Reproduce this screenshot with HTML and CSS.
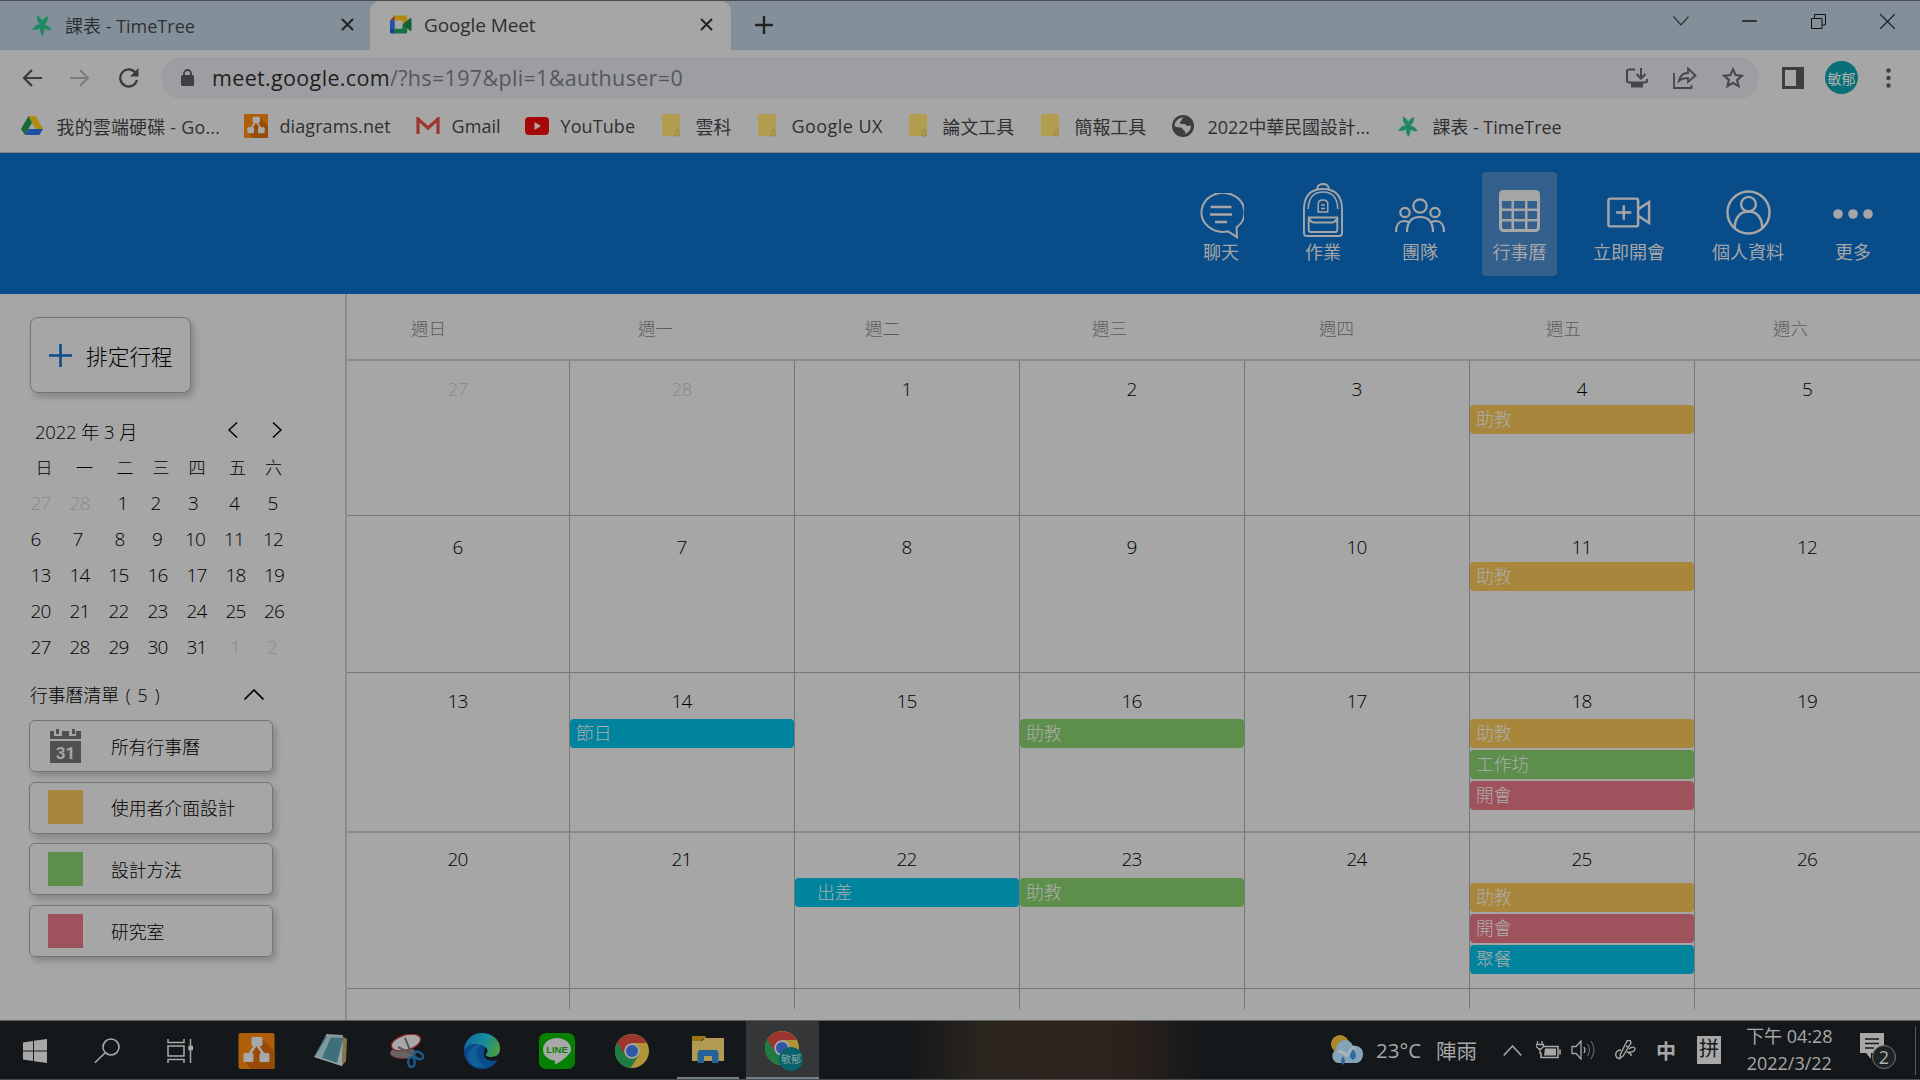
FILE: index.html
```html
<!DOCTYPE html>
<html lang="zh-Hant">
<head>
<meta charset="utf-8">
<title>Google Meet</title>
<link rel="stylesheet" href="styles.css">
</head>
<body>
<svg class="defs" width="0" height="0">
  <defs>
    <symbol id="timetree" viewBox="0 0 22 22">
      <g fill="#1f8a61"><path id="petal" d="M11 11.500C7.500 8 8.500 4 11 0c2.500 4 3.500 8 0 11.500z" transform="rotate(-28 11 11)"/><use href="#petal" transform="rotate(62 11 11)"/><use href="#petal" transform="rotate(-88 11 11)"/><use href="#petal" transform="rotate(146 11 11)"/><use href="#petal" transform="rotate(206 11 11)"/></g>
    </symbol>
    <symbol id="folder" viewBox="0 0 18 23"><rect width="18" height="22" rx="2" fill="#b19c50"/><path d="M13.500 22v-5q2-3 3.500 0v5z" fill="#b19c50" stroke="#94803a" stroke-width=".8"/></symbol>
    <symbol id="diagrams" viewBox="0 0 36 36">
      <rect width="36" height="36" rx="2" fill="#af5f0a"/><path d="M22 4l14 14v18H13L6 28z" fill="#984a08"/>
      <path d="M18 11L9 24M18 11l9 13" stroke="#a8a8a8" stroke-width="2.500"/><g fill="#a8a8a8"><rect x="13" y="4" width="11" height="9" rx="1.500"/><rect x="5" y="20" width="10" height="9" rx="1.500"/><rect x="21" y="20" width="10" height="9" rx="1.500"/></g>
    </symbol>
    <symbol id="chrome" viewBox="0 0 34 34">
      <circle cx="17" cy="17" r="17" fill="#b09435"/>
      <path d="M17 17L2.300 8.500A17 17 0 0 0 15.500 34L24 21z" fill="#1f7a43"/>
      <path d="M17 9h14.800A17 17 0 0 0 2.300 8.500L10 21z" fill="#9b352d"/>
      <circle cx="17" cy="17" r="7.800" fill="#a8a8a8"/><circle cx="17" cy="17" r="6" fill="#2f57a4"/>
    </symbol>
  </defs>
</svg>

<header class="browser">
  <div class="tabs">
    <div class="tab">
      <svg class="tab-icon" width="22" height="22"><use href="#timetree"/></svg>
      <span class="tab-title">課表 - TimeTree</span>
      <svg width="13" height="13" viewBox="0 0 13 13"><path d="M1 1l11 11M12 1L1 12" stroke="#222" stroke-width="2"/></svg>
    </div>
    <div class="tab tab-active">
      <svg class="tab-icon" width="22" height="19" viewBox="0 0 23 19"><path d="M0 5h5v9H0z" fill="#1f50a5"/><path d="M0 14h5v5H2q-2 0-2-2z" fill="#174290"/><path d="M5 0v5H0z" fill="#9c3028"/><path d="M5 0h11q2 0 2 2v4l-5 3V5H5z" fill="#b08a12"/><path d="M5 14h8v-4l5-1v8q0 2-2 2H5z" fill="#147340"/><path d="M13 9.500L21 3q1.500-1 1.500 1v11q0 2-1.500 1z" fill="#145f35"/></svg>
      <span class="tab-title latin">Google Meet</span>
      <svg width="13" height="13" viewBox="0 0 13 13"><path d="M1 1l11 11M12 1L1 12" stroke="#222" stroke-width="2"/></svg>
    </div>
    <svg class="new-tab" width="18" height="18" viewBox="0 0 18 18"><path d="M9 0v18M0 9h18" stroke="#222" stroke-width="2.400"/></svg>
    <div class="window-controls">
      <svg width="16" height="10" viewBox="0 0 16 10"><path d="M.5.5L8 9 15.500.5" fill="none" stroke="#333" stroke-width="1.200"/></svg>
      <svg width="15" height="2" viewBox="0 0 15 2"><path d="M0 1h15" stroke="#111" stroke-width="1.400"/></svg>
      <svg width="15" height="15" viewBox="0 0 15 15"><path d="M.5 4.500h10.500v10H.5zM3.500 4V.5h11V11H11" fill="none" stroke="#111"/></svg>
      <svg width="15" height="15" viewBox="0 0 15 15"><path d="M0 0l15 15M15 0L0 15" stroke="#111" stroke-width="1.100"/></svg>
    </div>
  </div>

  <div class="toolbar">
    <svg width="20" height="18" viewBox="0 0 20 18"><path d="M20 9H2M10 1L2 9l8 8" fill="none" stroke="#3a3b3d" stroke-width="2.200"/></svg>
    <svg width="20" height="18" viewBox="0 0 20 18"><path d="M0 9h18M10 1l8 8-8 8" fill="none" stroke="#7b7c7e" stroke-width="2"/></svg>
    <svg width="21" height="21" viewBox="0 0 21 21"><path d="M18 6.500A8.500 8.500 0 1 0 19 13" fill="none" stroke="#3a3b3d" stroke-width="2.300"/><path d="M20.500 1v8.500h-8.500z" fill="#3a3b3d"/></svg>
    <div class="omnibox">
      <svg width="13" height="17" viewBox="0 0 13 17"><rect y="6" width="13" height="11" rx="1.500" fill="#3e3f42"/><path d="M3 7V4.500a3.500 3.500 0 0 1 7 0V7" fill="none" stroke="#3e3f42" stroke-width="1.800"/></svg>
      <span class="url"><span class="host">meet.google.com</span>/?hs=197&amp;pli=1&amp;authuser=0</span>
      <div class="omni-actions">
        <svg width="22" height="20" viewBox="0 0 22 20"><path d="M9 1.500H3Q1 1.500 1 3.500v9q0 2 2 2h16q2 0 2-2V11M15 0v10M10.500 6l4.500 4.500L19.500 6" fill="none" stroke="#45464a" stroke-width="2"/><path d="M5 15h12v4.500H5z" fill="#45464a"/></svg>
        <svg width="24" height="22" viewBox="0 0 24 22"><path d="M1 6v15h17.500v-3M6 14C7 8 11 6 15 6V1.500l7.500 7L15 15v-4c-4 0-7 1-9 3z" fill="none" stroke="#45464a" stroke-width="1.800"/></svg>
        <svg width="22" height="21" viewBox="0 0 22 21"><path d="M11 2.200l2.600 5.900 6.300.6-4.800 4.200 1.500 6.300L11 15.900l-5.600 3.300 1.500-6.300-4.800-4.200 6.300-.6z" fill="none" stroke="#45464a" stroke-width="2"/></svg>
      </div>
    </div>
    <svg class="panel-icon" width="22" height="22" viewBox="0 0 22 22"><path d="M0 0h22v22H0zM3 3v16h11V3z" fill="#3e3f42" fill-rule="evenodd"/></svg>
    <span class="avatar">敏郁</span>
    <svg width="5" height="20" viewBox="0 0 5 20"><g fill="#3e3f42"><circle cx="2.500" cy="2.500" r="2.200"/><circle cx="2.500" cy="10" r="2.200"/><circle cx="2.500" cy="17.500" r="2.200"/></g></svg>
  </div>

  <div class="bookmarks">
    <div class="bookmark drive"><svg width="22" height="20" viewBox="0 0 22 20"><path d="M7.500 0h7L11 6.500 4 19 0 13z" fill="#176b3a"/><path d="M7.500 0h7L22 13h-7.500z" fill="#b08c10"/><path d="M4 19l3.500-6H22l-3.500 6z" fill="#1f50a5"/></svg><span>我的雲端硬碟 - Go...</span></div>
    <div class="bookmark"><svg width="24" height="24"><use href="#diagrams"/></svg><span class="latin">diagrams.net</span></div>
    <div class="bookmark"><svg width="24" height="18" viewBox="0 0 24 18"><path d="M2 17V2l10 9L22 2v15" fill="none" stroke="#9c3630" stroke-width="3.200"/></svg><span class="latin">Gmail</span></div>
    <div class="bookmark"><svg width="24" height="18" viewBox="0 0 24 18"><rect width="24" height="18" rx="4" fill="#a60707"/><path d="M9.500 5l6.500 4-6.500 4z" fill="#b5a5a5"/></svg><span class="latin">YouTube</span></div>
    <div class="bookmark narrow"><svg width="18" height="23"><use href="#folder"/></svg><span>雲科</span></div>
    <div class="bookmark narrow"><svg width="18" height="23"><use href="#folder"/></svg><span class="latin wide">Google UX</span></div>
    <div class="bookmark narrow"><svg width="18" height="23"><use href="#folder"/></svg><span>論文工具</span></div>
    <div class="bookmark narrow"><svg width="18" height="23"><use href="#folder"/></svg><span>簡報工具</span></div>
    <div class="bookmark"><svg width="22" height="22" viewBox="0 0 22 22"><circle cx="11" cy="11" r="11" fill="#3c3d40"/><path d="M12 2.500c-3 1-1 2-3 3.500s-1 3 1 3 3-.5 4 1 3 1 5 .5c0 4-2 7-6 8.500 0-2 1-2-1-3.500s-1-3-4-3-5-1-5.500-2C3 6 7 2 12 2.500z" fill="#a3a3a3"/></svg><span>2022中華民國設計...</span></div>
    <div class="bookmark"><svg width="22" height="22"><use href="#timetree"/></svg><span>課表 - TimeTree</span></div>
  </div>
</header>

<nav class="app-nav">
  <a class="nav-item"><span class="nav-icon"><svg width="46" height="46" viewBox="0 0 46 46" fill="none" stroke="#a6a6a6" stroke-width="2"><path d="M38.500 34.500A21.500 19.500 0 1 0 30 38.300L39 44z"/><path d="M12.500 14h21M12 21.500h22M17 29h12" stroke-width="2.400"/></svg></span>聊天</a>
  <a class="nav-item"><span class="nav-icon"><svg width="40" height="54" viewBox="0 0 42 54" preserveAspectRatio="none" fill="none" stroke="#a6a6a6" stroke-width="2"><path d="M15 6V5q1-4 6-4t6 4v1M1 50V25Q2 6 21 6t20 19v25q0 3-3 3H4q-3 0-3-3z"/><path d="M5.500 26Q6 9 21 9t15.500 17M16 29v-8q0-4 5-4t5 4v8zM19 22h4M19 25.500h4" stroke-width="1.600"/><path d="M6 34.500h30V47q0 2-2 2H8q-2 0-2-2zM6.500 36q2 3.500 5 3.500h19q3 0 5-3.500"/></svg></span>作業</a>
  <a class="nav-item"><span class="nav-icon"><svg width="50" height="35" viewBox="0 0 50 35" fill="none" stroke="#a6a6a6" stroke-width="2.200"><circle cx="25" cy="8" r="6.700"/><circle cx="10" cy="14.500" r="4.700"/><circle cx="40" cy="14.500" r="4.700"/><path d="M12 34C12 25 16 19 25 19s13 6 13 15M1 34c0-8 4-11 8-11q3 0 6 2M49 34c0-8-4-11-8-11q-3 0-6 2"/></svg></span>團隊</a>
  <a class="nav-item nav-active"><span class="nav-icon"><svg width="41" height="42" viewBox="0 0 41 42"><path fill="#a6a6a6" fill-rule="evenodd" d="M5 0h31q5 0 5 5v32q0 5-5 5H5q-5 0-5-5V5q0-5 5-5zM3 11v7.500h9.500V11zM15 11v7.500h11V11zM28.500 11v7.500H38V11zM3 21v8h9.500v-8zM15 21v8h11v-8zM28.500 21v8H38v-8zM3 31.500V37q0 2 2 2h7.500v-7.500zM15 31.500V39h11v-7.500zM28.500 31.500V39H36q2 0 2-2v-5.500z"/></svg></span>行事曆</a>
  <a class="nav-item"><span class="nav-icon"><svg width="44" height="31" viewBox="0 0 46 32" fill="none" stroke="#a6a6a6" stroke-width="2.600"><rect x="1.500" y="1.500" width="31" height="29" rx="2"/><path d="M32 13l12-8v22l-12-8M17.500 8.500v15M9.500 16h16"/></svg></span>立即開會</a>
  <a class="nav-item"><span class="nav-icon"><svg width="45" height="45" viewBox="0 0 46 46" fill="none" stroke="#a6a6a6" stroke-width="2.500"><circle cx="23" cy="23" r="21.500"/><circle cx="23" cy="14.500" r="7.500"/><path d="M9 38.500C9 29 14 22 23 22s14 7 14 16.500"/></svg></span>個人資料</a>
  <a class="nav-item"><span class="nav-icon"><svg width="40" height="10" viewBox="0 0 40 10" fill="#a6a6a6"><circle cx="5" cy="5" r="4.800"/><circle cx="20" cy="5" r="4.800"/><circle cx="35" cy="5" r="4.800"/></svg></span>更多</a>
</nav>

<main class="app">
  <aside class="sidebar">
    <button class="new-event"><svg width="23" height="23" viewBox="0 0 23 23"><path d="M11.500 0v23M0 11.500h23" stroke="#094c8a" stroke-width="2.600"/></svg>排定行程</button>
    <div class="month-head"><span>2022 年 3 月</span>
      <svg width="10" height="16" viewBox="0 0 10 16"><path d="M9 .5L1 8l8 7.500" fill="none" stroke="#000" stroke-width="1.500"/></svg>
      <svg width="10" height="16" viewBox="0 0 10 16"><path d="M1 .5L9 8l-8 7.500" fill="none" stroke="#000" stroke-width="1.500"/></svg>
    </div>
    <div class="mini mini-days"><span>日</span><span>一</span><span>二</span><span>三</span><span>四</span><span>五</span><span>六</span></div>
    <div class="mini mini-first"><span class="out">27</span><span class="out">28</span><span>1</span><span>2</span><span>3</span><span>4</span><span>5</span></div>
    <div class="mini mini-second"><span>6</span><span>7</span><span>8</span><span>9</span><span>10</span><span>11</span><span>12</span></div>
    <div class="mini"><span>13</span><span>14</span><span>15</span><span>16</span><span>17</span><span>18</span><span>19</span></div>
    <div class="mini"><span>20</span><span>21</span><span>22</span><span>23</span><span>24</span><span>25</span><span>26</span></div>
    <div class="mini mini-last"><span>27</span><span>28</span><span>29</span><span>30</span><span>31</span><span class="out">1</span><span class="out">2</span></div>
    <div class="list-head"><span>行事曆清單 ( 5 )</span><svg width="20" height="11" viewBox="0 0 20 11"><path d="M.5 10.500L10 1l9.500 9.500" fill="none" stroke="#000" stroke-width="1.600"/></svg></div>
    <div class="cal-list">
      <div class="cal-card"><svg class="cal-glyph" width="31" height="34" viewBox="0 0 31 34"><path d="M0 2h4v5h8V2h7v5h7V2h5v8H0zM6 0h3v5H6zM22 0h3v5h-3zM0 12h31v22H0z" fill="#505050"/><text x="15.500" y="29.500" text-anchor="middle" class="glyph-31">31</text></svg>所有行事曆</div>
      <div class="cal-card"><i class="swatch yellow"></i>使用者介面設計</div>
      <div class="cal-card"><i class="swatch green"></i>設計方法</div>
      <div class="cal-card"><i class="swatch red"></i>研究室</div>
    </div>
  </aside>

  <section class="calendar">
    <div class="weekdays"><span>週日</span><span>週一</span><span>週二</span><span>週三</span><span>週四</span><span>週五</span><span>週六</span></div>
    <div class="week week-1">
      <div class="day"><b class="out">27</b></div><div class="day"><b class="out">28</b></div><div class="day"><b>1</b></div><div class="day"><b>2</b></div><div class="day"><b>3</b></div>
      <div class="day"><b>4</b><p class="event yellow">助教</p></div><div class="day"><b>5</b></div>
    </div>
    <div class="week week-2">
      <div class="day"><b>6</b></div><div class="day"><b>7</b></div><div class="day"><b>8</b></div><div class="day"><b>9</b></div><div class="day"><b>10</b></div>
      <div class="day"><b>11</b><p class="event yellow">助教</p></div><div class="day"><b>12</b></div>
    </div>
    <div class="week week-3">
      <div class="day"><b>13</b></div><div class="day"><b>14</b><p class="event blue">節日</p></div><div class="day"><b>15</b></div><div class="day"><b>16</b><p class="event green">助教</p></div><div class="day"><b>17</b></div>
      <div class="day"><b>18</b><p class="event yellow">助教</p><p class="event green">工作坊</p><p class="event red">開會</p></div><div class="day"><b>19</b></div>
    </div>
    <div class="week week-4">
      <div class="day"><b>20</b></div><div class="day"><b>21</b></div><div class="day"><b>22</b><p class="event blue indented">出差</p></div><div class="day"><b>23</b><p class="event green">助教</p></div><div class="day"><b>24</b></div>
      <div class="day busy"><b>25</b><p class="event yellow">助教</p><p class="event red">開會</p><p class="event blue">聚餐</p></div><div class="day"><b>26</b></div>
    </div>
    <div class="week week-5"><div class="day"></div><div class="day"></div><div class="day"></div><div class="day"></div><div class="day"></div><div class="day"></div><div class="day"></div></div>
  </section>
</main>

<footer class="taskbar">
  <div class="task"><svg width="24" height="24" viewBox="0 0 24 24" fill="#a8a8a8"><path d="M0 3.500L10 2v9.500H0zM11 1.800L24 0v11.500H11zM0 12.500h10V22L0 20.500zM11 12.500h13V24l-13-1.800z"/></svg></div>
  <div class="task"><svg width="26" height="25" viewBox="0 0 26 25" fill="none" stroke="#a8a8a8" stroke-width="1.600"><circle cx="17" cy="9" r="8"/><path d="M11 15L1 24.500"/></svg></div>
  <div class="task"><svg width="26" height="24" viewBox="0 0 26 24" fill="none" stroke="#a8a8a8" stroke-width="1.500"><path d="M1 0v3.500h16V0M1 24v-3.500h16V24M1 7h16v10H1zM23.500 0v24"/><path d="M22 7.500h3.500v3H22z" fill="#a8a8a8"/></svg></div>
  <div class="task"><svg width="37" height="36"><use href="#diagrams"/></svg></div>
  <div class="task"><svg width="34" height="33" viewBox="0 0 34 33"><path d="M29 3l4 2-1 22-4 5z" fill="#8a7444"/><path d="M12 1l17 1-1 30L0 23z" fill="#4b7681"/><path d="M13 4l15 1-7 24L1 22z" fill="#3d707b"/><path d="M13 3l4 0-9 21-7-2z" fill="#7d9ba0"/><path d="M12 0l17 1-.5 3L12 3z" fill="#8d989b"/><path d="M23 30L29 6l-1 26z" fill="#9aa6a8"/><path d="M0 23l2-1 24 8 2 2z" fill="#a0a6a7"/></svg></div>
  <div class="task"><svg width="34" height="34" viewBox="0 0 34 34"><ellipse cx="13" cy="19" rx="13" ry="5.500" fill="#666" stroke="#7d2b2b"/><ellipse cx="16" cy="8.500" rx="15" ry="7.500" transform="rotate(-16 16 8.500)" fill="#a8a8a8" stroke="#8e2529" stroke-width="1.300"/><path d="M15 4l7 17M8 13l16 8" stroke="#565a5c" stroke-width="2"/><g fill="none" stroke="#1d5c8c" stroke-width="2.400"><ellipse cx="28.500" cy="21.500" rx="5" ry="3.300" transform="rotate(30 28.500 21.500)"/><ellipse cx="21.500" cy="28" rx="3.300" ry="5"/></g></svg></div>
  <div class="task"><svg width="36" height="36" viewBox="0 0 36 36"><defs><linearGradient id="edge-top" x1="0" x2="1" y1=".3" y2=".6"><stop offset="0" stop-color="#146aa2"/><stop offset=".55" stop-color="#168c9c"/><stop offset="1" stop-color="#4f9d3d"/></linearGradient></defs><circle cx="18" cy="18" r="18" fill="#0b4a8c"/><path d="M0 17C1 7 8 0 18 0s18 7 18 15c0 6-4 9-9 9-4 0-6-1-5-3 3-3 1-8-5-9C10 10 4 11 0 17z" fill="url(#edge-top)"/><path d="M17 12c-6 3-7 17 5 21-9 4-20-2-18-11 1-6 7-10 13-10z" fill="#0f6098"/><path d="M22 21c-1 2 1 3 5 3 4 0 7-1 9-4v7l-2 0c-7 2-15 0-14-7 0-3 0-5 2-5 2 1 2 4 0 6z" fill="#15181a"/></svg></div>
  <div class="task"><svg width="36" height="36" viewBox="0 0 36 36"><rect width="36" height="36" rx="7" fill="#068000"/><path d="M18 5C10 5 4 10 4 16.500c0 5.500 4.500 10 11 11 2 .4 1 2 1 3.500 0 1 9-4 13-9 2-2 3-3.500 3-5.500C32 10 26 5 18 5z" fill="#a8a8a8"/><text x="18" y="19.500" text-anchor="middle" class="line-text">LINE</text></svg></div>
  <div class="task"><svg width="34" height="34"><use href="#chrome"/></svg></div>
  <div class="task task-open"><svg width="32" height="27" viewBox="0 0 32 27"><path d="M0 0h13l2 3h-4L8 6H0z" fill="#9a7312"/><path d="M0 5h10l3-3h19v22q0 1-1 1H1q-1 0-1-1z" fill="#b39a52"/><path d="M5.500 27V17q0-3 3-3h15q3 0 3 3v10H20v-7h-8v7z" fill="#246299"/></svg></div>
  <div class="task task-open task-current"><svg class="chrome-user" width="38" height="40" viewBox="0 0 38 40"><use href="#chrome" width="34" height="34"/><circle cx="26" cy="28" r="12" fill="#08636c"/><text x="26" y="32" text-anchor="middle" class="badge-text">敏郁</text></svg></div>
  <div class="tray">
    <svg class="weather-icon" width="32" height="30" viewBox="0 0 32 30"><circle cx="9" cy="9" r="9" fill="#b0882c"/><path d="M7 28a7 7 0 0 1-2-13C6 8 10 5 14 5s7 3 8 6c6-1 10 3 10 8s-3 9-7 9z" fill="#86a4b8"/><path d="M7 17c4-2 6 1 8 3s5-7 9-8" fill="none" stroke="#a5b4be" stroke-width="3"/><path d="M22 14q6 8 0 11-6-3 0-11zM12 21q4 6 0 9-4-3 0-9z" fill="#2e69a0"/></svg>
    <span class="weather">23°C</span><span class="weather rain">陣雨</span>
    <svg class="expand" width="19" height="11" viewBox="0 0 19 11"><path d="M.7 10.500L9.500 1l8.800 9.500" fill="none" stroke="#a8a8a8" stroke-width="1.500"/></svg>
    <svg width="25" height="18" viewBox="0 0 25 18"><path d="M6 5.500h16v11H5v-5M24 8.500v5" fill="none" stroke="#a8a8a8" stroke-width="1.600"/><path d="M9 7.500h11v7H8z" fill="#a8a8a8"/><path d="M1.500 0v3M6 0v3M0 3.500h7.500v2L5 8H3L0 5.500zM4 8v5" fill="#15181a" stroke="#a8a8a8" stroke-width="1.300"/></svg>
    <svg class="volume" width="24" height="20" viewBox="0 0 24 20" fill="none" stroke="#a8a8a8" stroke-width="1.300"><path d="M1 6.500h4l5-5.500v18l-5-5.500H1z"/><path d="M13 7q2 3 0 6"/><path d="M16.500 4q4 6 0 12M20 1q6 9 0 18" stroke="#5d5f60"/></svg>
    <svg class="pen" width="21" height="20" viewBox="0 0 21 20" fill="none" stroke="#a8a8a8" stroke-width="1.400"><path d="M12 1l3-1 1 3-8 13-3 2 .5-4zM11 6l3 1.500"/><path d="M6 10c-4 0-6 3-5 6s4 3 5 2M14 9c3-3 6-2 6 0s-3 4-8 3c2 1 5 2 4 4"/></svg>
    <span class="ime">中</span><span class="ime-mode">拼</span>
    <div class="clock"><span>下午 04:28</span><span>2022/3/22</span></div>
    <div class="notice"><svg width="37" height="36" viewBox="0 0 37 36"><path d="M0 0h24v20H11v6l-5-6H0z" fill="#a8a8a8"/><path d="M5 6h14M5 10.500h14M5 15h9" stroke="#15181a" stroke-width="1.500"/><circle cx="24" cy="24" r="11.500" fill="#202324" stroke="#777"/><text x="24" y="30.500" text-anchor="middle" class="notice-count">2</text></svg></div>
  </div>
</footer>
</body>
</html>
```
FILE: styles.css
```css
* { box-sizing: border-box; }
body { margin: 0; width: 1920px; height: 1080px; overflow: hidden; background: #a6a6a6; color: #000; font-family: "Open Sans", "Noto Sans CJK TC", sans-serif; font-weight: 300; }
svg { display: block; flex: none; }
.defs { position: absolute; }

/* browser chrome */
.browser { height: 153px; border-bottom: 1px solid #858585; font-weight: 400; color: #2f3032; }
.tabs { display: flex; align-items: center; height: 50px; background: #839099; border-top: 1px solid #4c4c4f; }
.tab { display: flex; align-items: center; width: 370px; height: 49px; padding: 0 16px 2px 31px; font-size: 18px; }
.tab-title { flex: 1; margin-left: 12px; white-space: nowrap; }
.tab-active { width: 361px; padding: 0 18px 2px 20px; background: #a6a6a6; border-radius: 10px 10px 0 0; }
.latin { font-size: 19px; letter-spacing: -.1px; }
.new-tab { margin: 0 0 2px 24px; }
.window-controls { display: grid; grid-template-columns: 69px 69px 69px 15px; align-items: center; margin-left: auto; margin-right: 25px; padding-bottom: 9px; }
.toolbar { display: flex; align-items: center; height: 55px; padding: 0 29px 0 22px; }
.toolbar > svg:nth-child(2) { margin-left: 28px; }
.toolbar > svg:nth-child(3) { margin-left: 28px; }
.omnibox { display: flex; align-items: center; width: 1598px; height: 42px; margin-left: 22px; padding: 0 15px 0 20px; border-radius: 21px; background: #9d9ea1; }
.url { margin-left: 18px; font-size: 21.5px; letter-spacing: .34px; color: #55575a; }
.host { color: #1d1e20; }
.omni-actions { display: flex; align-items: center; gap: 25px; margin-left: auto; }
.panel-icon { margin-left: 23px; }
.avatar { display: flex; align-items: center; justify-content: center; width: 33px; height: 33px; margin: 0 28px 0 21px; border-radius: 50%; background: #086f79; color: #b0b0b0; font-size: 14px; }
.bookmarks { display: grid; grid-template-columns: 223px 172px 109px 137px 96px 151px 132px 131px 225px 200px; align-items: center; height: 42px; padding: 0 0 1px 21px; font-size: 17.900px; }
.bookmark { display: grid; grid-template-columns: 35.500px auto; align-items: center; justify-content: start; white-space: nowrap; }
.bookmark .latin { font-size: 18px; letter-spacing: .08px; }
.bookmark .wide { letter-spacing: .45px; }
.drive { letter-spacing: .25px; }
.narrow { grid-template-columns: 33.500px auto; }

/* application navigation */
.app-nav { display: grid; grid-template-columns: 102px 102px 92px 107px 112px 126px 84px; justify-content: end; justify-items: center; height: 141px; padding: 19px 25px 0 0; background: #094c8a; }
.nav-item { display: flex; flex-direction: column; align-items: center; width: 76px; height: 104px; border-radius: 4px; color: #a6a6a6; font-size: 18px; line-height: 24px; white-space: nowrap; font-weight: 400; }
.nav-active { width: 75px; background: #34608e; }
.nav-icon { display: flex; align-items: center; justify-content: center; height: 68px; padding-top: 12px; }
.nav-item:nth-child(1) .nav-icon { padding-top: 19px; }
.nav-item:nth-child(2) .nav-icon { padding-top: 8px; }
.nav-item:nth-child(3) .nav-icon { padding-top: 18px; }
.nav-item:nth-child(7) .nav-icon { padding-top: 16px; }
.nav-item:nth-child(4) .nav-icon { padding-top: 9px; }

/* sidebar */
.app { display: flex; height: 726px; }
.sidebar { width: 347px; border-right: 2px solid #8c8c8c; padding-top: 23px; }
.new-event { display: flex; align-items: center; gap: 14px; width: 161px; height: 76px; margin: 0 0 0 30px; padding: 0 0 0 18px; border: 1px solid #747474; border-radius: 8px; background: #a6a6a6; box-shadow: 3px 4px 6px rgba(0,0,0,.2); font: inherit; font-size: 21.700px; color: #000; }
.month-head { display: flex; align-items: center; height: 30px; margin: 22px 0 0 35px; font-size: 18.500px; letter-spacing: -.2px; }
.month-head span { width: 193px; padding-top: 1px; white-space: nowrap; }
.month-head svg + svg { margin-left: 34px; }
.mini { display: grid; grid-template-columns: 39px 39px 39px 39px 39px 38.500px 30px; align-items: center; height: 36px; padding-left: 30.500px; font-size: 19px; letter-spacing: -.9px; }
.mini-days { grid-template-columns: 40.500px 40.500px 36px 36px 40.500px 36px 30px; margin-top: 3px; margin-bottom: 1px; padding-left: 35.500px; font-size: 17px; letter-spacing: 0; }
.mini-first { grid-template-columns: 39px 48px 33px 37.500px 41px 38.500px 30px; }
.mini-second { grid-template-columns: 42px 42px 37.500px 33px 39px 39px 30px; }
.mini-last { grid-template-columns: 39px 39px 39px 39px 43.500px 37px 30px; }
.out { color: #8a8a8a; }
.list-head { display: flex; align-items: center; justify-content: space-between; height: 30px; margin: 14px 81px 0 30px; font-size: 17.800px; word-spacing: 2.300px; }
.cal-list { display: grid; gap: 9.700px; margin: 11px 0 0 29px; }
.cal-card { display: flex; align-items: center; width: 244px; height: 52px; padding: 0 0 1px 18px; border: 1px solid #747474; border-radius: 6px; box-shadow: 3px 4px 6px rgba(0,0,0,.2); font-size: 17.800px; }
.swatch { width: 35px; height: 34px; margin-right: 28px; }
.cal-glyph { margin: 0 30px 0 2px; }
.glyph-31 { font: 700 17px "Roboto", sans-serif; fill: #a6a6a6; }
.yellow { background: #a8873c; }
.green { background: #5e8e4b; }
.red { background: #9e525c; }
.blue { background: #00839d; }

/* month grid */
.calendar { width: 1573px; }
.weekdays { display: grid; grid-template-columns: repeat(7, 227px); align-items: center; width: 1573px; height: 67px; padding: 1px 0 0 64px; border-bottom: 2px solid #8b8b8b; overflow: hidden; color: #5c5c5c; font-size: 17.500px; }
.week { display: grid; grid-template-columns: 223px repeat(6, 225px); }
.day { border-right: 1px solid #767676; border-bottom: 1px solid #767676; }
.day:last-child { border-right: 0; }
.day b { display: block; height: 30px; padding-right: 1px; line-height: 30px; text-align: center; font-size: 19px; letter-spacing: -.9px; font-weight: 300; }
.day p { margin: 0 0 2px; }
.event { height: 29px; padding-left: 6px; border-radius: 4px; line-height: 29px; font-size: 17.800px; color: #adadad; }
.indented { padding-left: 22px; }
.week-1 .day { height: 155px; padding-top: 13px; }
.week-1 b { margin-bottom: 1px; }
.week-2 .day { height: 157px; padding-top: 16px; }
.week-3 .day { height: 160px; padding-top: 13px; border-bottom: 2px solid #8b8b8b; }
.week-3 b { margin-bottom: 3px; }
.week-4 .day { height: 156px; padding-top: 11px; }
.week-4 b { margin-bottom: 4px; }
.week-4 .busy b { margin-bottom: 9px; }
.week-5 .day { height: 20px; border-bottom: 0; }

/* taskbar */
.taskbar { display: flex; height: 60px; border-top: 1px solid #5b605f; background: linear-gradient(90deg, rgba(45,36,30,0) 910px, #2a241e 980px, #2f241f 1080px, #2b211d 1130px, rgba(45,36,30,0) 1200px), #15181a; border-bottom: 1px solid #4b4b4b; font-weight: 400; }
.task { display: flex; align-items: center; justify-content: center; width: 75px; padding-top: 1px; }
.task:nth-child(1) { width: 70px; }
.task:nth-child(2), .task:nth-child(3) { width: 73px; }
.task:nth-child(4) { width: 80px; }
.task:nth-child(5) { width: 70px; }
.task:nth-child(6) { width: 82px; }
.task:nth-child(7) { width: 67px; }
.task:nth-child(8) { width: 84px; }
.task:nth-child(9) { width: 66px; }
.task-open { width: 62px; margin-left: 12px; border-bottom: 2px solid #71818c; }
.task-current { width: 73px; margin-left: 7px; background: #343637; }
.chrome-user { margin: 3px 0 0 3px; }
.line-text { font: 700 9.500px "Liberation Sans", sans-serif; fill: #068000; }
.badge-text { font: 10px "Noto Sans CJK TC", sans-serif; fill: #8ba4a7; }
.tray { display: flex; align-items: center; margin-left: auto; padding-right: 4px; color: #a8a8a8; white-space: nowrap; }
.tray > svg { margin-right: 10px; }
.tray > .weather-icon { margin-right: 13px; }
.weather { width: 60px; font-size: 20.500px; }
.rain { width: 67px; }
.tray > .expand { margin-right: 14px; }
.tray > .volume { margin-right: 20px; }
.tray > .pen { margin-right: 20px; }
.ime { margin-right: 21px; font-size: 20px; font-weight: 700; }
.ime-mode { width: 24px; height: 28px; margin-right: 25px; background: #a8a8a8; color: #15181a; font-size: 20px; line-height: 26px; text-align: center; }
.clock { display: grid; gap: 0; width: 86px; margin-right: 28px; font-size: 18px; line-height: 27px; text-align: center; }
.notice { padding: 7px 18px 6px 0; border-right: 1px solid #55585a; }
.notice-count { font: 18px "Open Sans", sans-serif; fill: #b0b0b0; }
```
